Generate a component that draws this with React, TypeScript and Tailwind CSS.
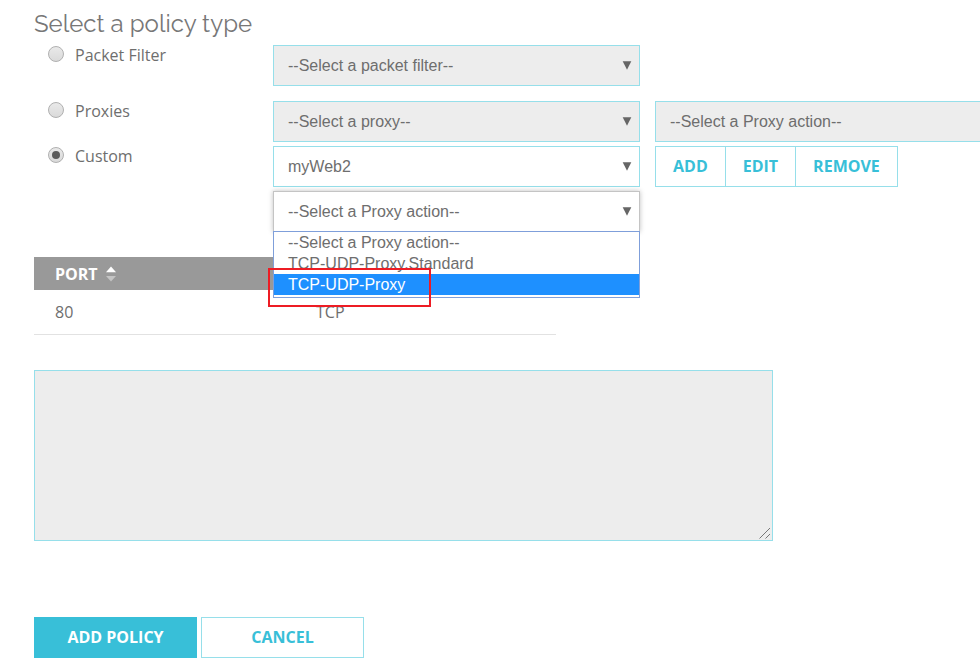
import { useState, type ReactNode } from "react";

const sans = "font-['Liberation_Sans',Arial,sans-serif]";
const openSans = "font-['Open_Sans',sans-serif]";

function Dropdown({
  label,
  options,
  disabled = false,
  open = false,
}: {
  label: string;
  options: string[];
  disabled?: boolean;
  open?: boolean;
}) {
  const look = disabled
    ? "border-[#96dfea] bg-[#ededed]"
    : open
      ? "border-[#c4c4c4] bg-white shadow-[0_0_5px_rgba(0,0,0,0.25)]"
      : "border-[#96dfea] bg-white";
  return (
    <div className="relative">
      <select
        aria-label={label}
        disabled={disabled}
        className={`block h-[41px] w-full appearance-none border pr-8 pl-[14px] text-base text-[#6e6e6e] opacity-100 outline-none disabled:border-[#96dfea]! ${sans} ${look}`}
      >
        {options.map((o) => (
          <option key={o}>{o}</option>
        ))}
      </select>
      <svg
        aria-hidden="true"
        viewBox="0 0 10 9"
        className="pointer-events-none absolute top-4 right-2 h-[9px] w-[10px] fill-[#666]"
      >
        <path d="M0.7 0.3h8.6L5 8.8z" />
      </svg>
    </div>
  );
}

function PolicyRadio({
  name,
  checked,
  onSelect,
}: {
  name: string;
  checked: boolean;
  onSelect: () => void;
}) {
  return (
    <label className={`flex h-5 items-start gap-[11px] pl-[14px] text-base/5 text-[#6e6e6e] ${openSans}`}>
      <input
        type="radio"
        name="policy-type"
        checked={checked}
        onChange={onSelect}
        className="mt-px grid size-4 appearance-none place-items-center rounded-full border border-[#b0b0b0] bg-linear-to-b from-[#e9e9e9] to-[#dadada] before:size-2 before:rounded-full checked:before:bg-[#5c5c5c] checked:before:content-['']"
      />
      <span>{name}</span>
    </label>
  );
}

function Row({ children }: { children: ReactNode }) {
  return <div className="grid grid-cols-[239px_367px_367px] items-start">{children}</div>;
}

const actions = ["--Select a Proxy action--", "TCP-UDP-Proxy.Standard", "TCP-UDP-Proxy"];
const groupButton = "border-[#96dfea] px-[17px] pb-0.5 not-first:border-l";

export default function App() {
  const [type, setType] = useState("Custom");
  return (
    <main className={`overflow-hidden bg-white pt-2 pb-[5px] pl-[34px] text-[#6e6e6e] ${openSans}`}>
      <h1 className="h-[37px] font-['Raleway','Lato',sans-serif] text-2xl/[31px] font-normal text-[#777]">
        Select a policy type
      </h1>

      <form onSubmit={(e) => e.preventDefault()}>
        <div className="flex flex-col gap-1">
          <div className="mb-[11px]">
            <Row>
              <PolicyRadio
                name="Packet Filter"
                checked={type === "Packet Filter"}
                onSelect={() => setType("Packet Filter")}
              />
              <Dropdown label="Packet filter" options={["--Select a packet filter--"]} disabled />
            </Row>
          </div>
          <Row>
            <PolicyRadio name="Proxies" checked={type === "Proxies"} onSelect={() => setType("Proxies")} />
            <Dropdown label="Proxy" options={["--Select a proxy--"]} disabled />
            <div className="ml-[15px]">
              <Dropdown label="Proxy action" options={["--Select a Proxy action--"]} disabled />
            </div>
          </Row>
          <Row>
            <PolicyRadio name="Custom" checked={type === "Custom"} onSelect={() => setType("Custom")} />
            <Dropdown label="Custom policy" options={["myWeb2"]} />
            <div className="ml-[15px] flex h-[41px] w-fit border border-[#96dfea] text-base font-bold text-[#38bfd8]">
              <button type="button" className={groupButton}>ADD</button>
              <button type="button" className={groupButton}>EDIT</button>
              <button type="button" className={groupButton}>REMOVE</button>
            </div>
          </Row>
          <Row>
            <div className="relative col-start-2">
              <Dropdown label="Custom proxy action" options={actions} open />
              <ul
                role="listbox"
                aria-label="Proxy actions"
                className={`absolute top-[40px] left-0 z-10 w-full border border-[#7f9fda] bg-white pb-0.5 text-base/[21px] ${sans}`}
              >
                {actions.map((a, i) => (
                  <li
                    key={a}
                    role="option"
                    aria-selected={i === 2}
                    className="pl-[14px] aria-selected:bg-[#1e90ff] aria-selected:text-white"
                  >
                    {a}
                  </li>
                ))}
              </ul>
              <div className="pointer-events-none absolute top-[77px] -left-[5px] z-20 h-[39px] w-[163px] border-2 border-[#ed1c24]" />
            </div>
          </Row>
        </div>

        <table className="mt-[25px] w-[522px] table-fixed border-collapse text-left text-base/5">
          <thead>
            <tr className="h-[33px] bg-[#999] text-white">
              <th scope="col" className="w-[261px] pl-[21px] font-bold">
                <button type="button" className="flex items-center gap-2">
                  PORT
                  <svg aria-hidden="true" viewBox="0 0 10 16" className="h-4 w-[10px]">
                    <path d="M0 6.2 5 .5l5 5.7z" fill="#fff" />
                    <path d="M0 10h10l-5 5.5z" fill="#c4c4c4" />
                  </svg>
                </button>
              </th>
              <td />
            </tr>
          </thead>
          <tbody>
            <tr className="h-11 border-b border-[#e2e2e2]">
              <td className="pl-[21px]">80</td>
              <td className="pl-[21px]">TCP</td>
            </tr>
          </tbody>
        </table>

        <div className="relative mt-[35px] w-[739px] max-w-full">
          <textarea
            aria-label="Description"
            disabled
            className="block h-[171px] w-full resize-none border border-[#96dfea] bg-[#ededed] p-3"
          />
          <svg
            aria-hidden="true"
            viewBox="0 0 12 12"
            className="pointer-events-none absolute right-0.5 bottom-0.5 size-3 stroke-[#777]"
          >
            <path d="M0.5 11.5 11 1M6.5 11.5 11 7" fill="none" />
          </svg>
        </div>

        <div className="mt-[76px] flex gap-1 text-base font-bold">
          <button type="submit" className="h-[41px] w-[163px] border border-[#38bfd8] bg-[#38bfd8] text-white">
            ADD POLICY
          </button>
          <button type="button" className="h-[41px] w-[163px] border border-[#96dfea] bg-white text-[#38bfd8]">
            CANCEL
          </button>
        </div>
      </form>
    </main>
  );
}
